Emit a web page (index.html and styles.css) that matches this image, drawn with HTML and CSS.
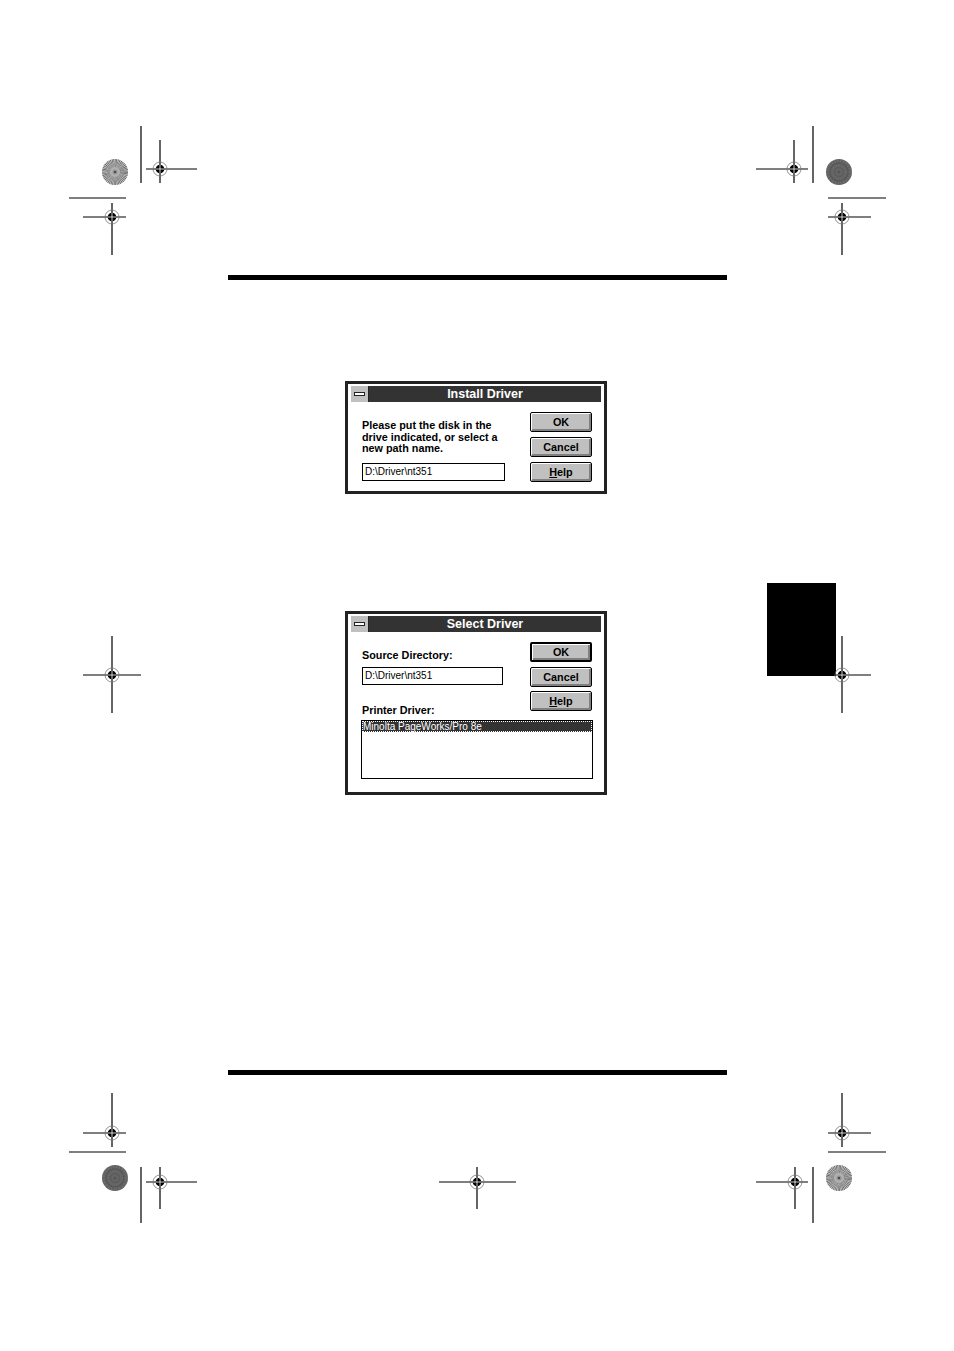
FILE: index.html
```html
<!DOCTYPE html>
<html>
<head>
<meta charset="utf-8">
<title>Install Driver</title>
<link rel="stylesheet" href="styles.css">
</head>
<body>
<div class="page">
  <div class="sheet">
    <div class="rule"></div>

    <div class="dialog dialog-install">
      <div class="titlebar">
        <div class="sysmenu"><span class="sysbar"></span></div>
        <div class="title">Install Driver</div>
      </div>
      <div class="body body-install">
        <div class="col-left col-install">
          <p class="prompt">Please put the disk in the<br>drive indicated, or select a<br>new path name.</p>
          <div class="field field-install">D:\Driver\nt351</div>
        </div>
        <div class="buttons">
          <div class="btn">OK</div>
          <div class="btn">Cancel</div>
          <div class="btn"><u>H</u>elp</div>
        </div>
      </div>
    </div>

    <div class="dialog dialog-select">
      <div class="titlebar">
        <div class="sysmenu"><span class="sysbar"></span></div>
        <div class="title">Select Driver</div>
      </div>
      <div class="body body-select">
        <div class="top-row">
          <div class="col-left col-select">
            <div class="label label-source">Source Directory:</div>
            <div class="field field-select">D:\Driver\nt351</div>
            <div class="label label-printer">Printer Driver:</div>
          </div>
          <div class="buttons buttons-select">
            <div class="btn btn-default">OK</div>
            <div class="btn">Cancel</div>
            <div class="btn"><u>H</u>elp</div>
          </div>
        </div>
        <div class="listbox">
          <div class="list-item selected">Minolta PageWorks/Pro 8e</div>
        </div>
      </div>
    </div>

    <div class="rule rule-bottom"></div>
  </div>

  <svg class="marks" width="954" height="1351" viewBox="0 0 954 1351" xmlns="http://www.w3.org/2000/svg">
    <defs>
      <g id="tgt">
        <circle r="7" fill="none" stroke="#777" stroke-width="0.8"/>
        <circle r="4.3" fill="#000"/>
        <path d="M-4.3 0H4.3M0 -4.3V4.3" stroke="#fff" stroke-width="0.8"/>
      </g>
      <g id="sunlight">
        <circle r="13" fill="#d4d4d4"/>
        <circle r="6.5" fill="none" stroke="#5a5a5a" stroke-width="13" stroke-dasharray="0.4254 0.4254"/>
        <circle r="5" fill="#b0b0b0"/>
        <circle r="2.5" fill="#909090"/>
        <circle r="1" fill="#333"/>
      </g>
      <g id="sundark">
        <circle r="13" fill="#626262"/>
        <circle r="6.5" fill="none" stroke="#808080" stroke-width="13" stroke-dasharray="0.4254 1.2762" opacity="0.6"/>
        <circle r="9" fill="none" stroke="#4e4e4e" stroke-width="1.5" opacity="0.6"/>
        <circle r="4.5" fill="none" stroke="#555" stroke-width="1.5" opacity="0.6"/>
        <circle r="1.5" fill="#555"/>
      </g>
    </defs>

    <rect x="767" y="583" width="69" height="93" fill="#000"/>

    <g stroke="#000" stroke-width="1.2" fill="none">
      <path d="M141 126V183M813 126V183M69 198H126M828 198H886"/>
      <path d="M69 1152H126M828 1152H886M141 1167V1223M813 1167V1223"/>
      <path d="M146 169H197M160 140V183"/>
      <path d="M83 217H126M112 203V255"/>
      <path d="M756 169H808M794 140V183"/>
      <path d="M828 217H871M842 203V255"/>
      <path d="M836 675H871M842 636V713"/>
      <path d="M83 675H141M112 636V713"/>
      <path d="M83 1133H126M112 1093V1147"/>
      <path d="M146 1182H197M160 1167V1209"/>
      <path d="M439 1182H516M477 1167V1209"/>
      <path d="M756 1182H808M795 1167V1209"/>
      <path d="M828 1133H871M842 1093V1147"/>
    </g>

    <use href="#tgt" x="160" y="169"/>
    <use href="#tgt" x="112" y="217"/>
    <use href="#tgt" x="794" y="169"/>
    <use href="#tgt" x="842" y="217"/>
    <use href="#tgt" x="842" y="675"/>
    <use href="#tgt" x="112" y="675"/>
    <use href="#tgt" x="112" y="1133"/>
    <use href="#tgt" x="160" y="1182"/>
    <use href="#tgt" x="477" y="1182"/>
    <use href="#tgt" x="795" y="1182"/>
    <use href="#tgt" x="842" y="1133"/>

    <use href="#sunlight" x="115" y="172"/>
    <use href="#sundark" x="839" y="172"/>
    <use href="#sundark" x="115" y="1178"/>
    <use href="#sunlight" x="839" y="1178"/>
  </svg>
</div>
</body>
</html>
```

FILE: styles.css
```css
html, body {
  margin: 0;
  padding: 0;
  background: #fff;
}

.page {
  position: relative;
  width: 954px;
  height: 1351px;
  overflow: hidden;
  font-family: "Liberation Sans", Arial, sans-serif;
  color: #000;
}

.marks {
  position: absolute;
  left: 0;
  top: 0;
}

.sheet {
  padding-top: 275px;
  margin-left: 228px;
  width: 499px;
}

.rule {
  height: 5px;
  background: #000;
}

.rule-bottom {
  margin-top: 275px;
}

.dialog {
  box-sizing: border-box;
  width: 262px;
  margin-left: 117px;
  border: 3px solid #222;
  padding: 2px 3px 3px;
  background: #fff;
}

.dialog-install {
  margin-top: 101px;
}

.dialog-select {
  margin-top: 117px;
}

.titlebar {
  display: flex;
  height: 16px;
  background: #333;
}

.sysmenu {
  box-sizing: border-box;
  width: 18px;
  height: 16px;
  background: #c0c0c0;
  border-right: 1px solid #222;
  display: flex;
  align-items: center;
  justify-content: center;
}

.sysbar {
  box-sizing: border-box;
  width: 11px;
  height: 4px;
  border: 1px solid #222;
  background: #fff;
}

.title {
  flex: 1;
  text-align: center;
  color: #fff;
  font-weight: bold;
  font-size: 12.5px;
  line-height: 16px;
}

.body-install {
  display: flex;
  padding: 10px 9px 6px 11px;
}

.col-install {
  width: 143px;
  padding-top: 8px;
}

.prompt {
  margin: 0;
  font-weight: bold;
  font-size: 10.8px;
  line-height: 11.5px;
}

.field {
  box-sizing: border-box;
  height: 18px;
  border: 1px solid #000;
  background: #fff;
  font-size: 10px;
  line-height: 16px;
  padding-left: 2px;
  white-space: nowrap;
}

.field-install {
  margin-top: 8.5px;
}

.buttons {
  margin-left: auto;
  width: 62px;
  display: flex;
  flex-direction: column;
  gap: 5px;
}

.btn {
  box-sizing: border-box;
  height: 20px;
  border: 1px solid #000;
  border-radius: 2px;
  background: #c0c0c0;
  box-shadow: inset 1px 1px 0 #fff, inset -2px -2px 0 #808080;
  font-weight: bold;
  font-size: 10.8px;
  line-height: 18px;
  text-align: center;
}

.btn u {
  text-decoration-thickness: 1px;
  text-underline-offset: 1px;
}

.btn-default {
  border-width: 2px;
  line-height: 16px;
}

.body-select {
  padding: 10px 8px 10px 10px;
}

.top-row {
  display: flex;
}

.col-select {
  width: 141px;
  margin-left: 1px;
}

.label {
  font-weight: bold;
  font-size: 10.8px;
  line-height: 11.5px;
  white-space: nowrap;
}

.label-source {
  margin-top: 8px;
}

.field-select {
  margin-top: 5px;
}

.label-printer {
  margin-top: 20px;
}

.buttons-select {
  margin-right: 1px;
  gap: 4.5px;
}

.listbox {
  box-sizing: border-box;
  margin-top: 4px;
  height: 59px;
  border: 1px solid #000;
  background: #fff;
}

.list-item {
  font-size: 10px;
  line-height: 11px;
  padding-left: 1px;
  white-space: nowrap;
}

.list-item.selected {
  background: #333;
  color: #fff;
  outline: 1px dotted #fff;
  outline-offset: -1px;
}
```
